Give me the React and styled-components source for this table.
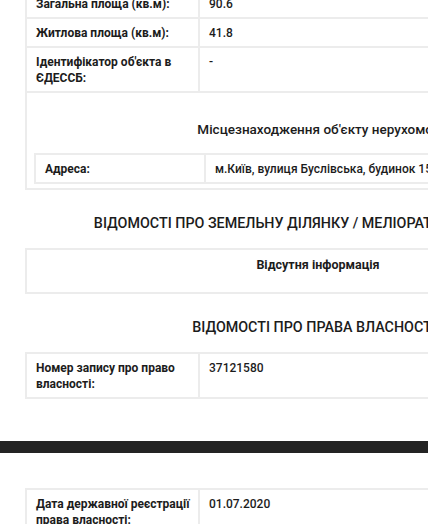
import React from "react";
import styled, { createGlobalStyle } from "styled-components";

const GlobalStyle = createGlobalStyle`
  html, body {
    margin: 0;
    padding: 0;
    background: #fff;
    overflow: hidden;
  }
  body {
    font-family: Roboto, "Liberation Sans", Arial, sans-serif;
    color: #1c1c1c;
  }
`;

const Viewport = styled.div`
  width: 428px;
  height: 524px;
  overflow: hidden;
`;

const Sheet = styled.div`
  width: 578px;
  padding-left: 25px;
  margin-top: ${(p) => p.$shift || "0"};
`;

const Card = styled.div`
  border: 2px solid #ececec;
  border-right: none;
`;

const Row = styled.div`
  display: grid;
  grid-template-columns: ${(p) => p.$label || "173px"} 1fr;
  border-bottom: ${(p) => (p.$last ? "none" : "2px solid #ececec")};
`;

const Label = styled.div`
  padding: 6px 9px 5px;
  font-size: 12px;
  line-height: 16px;
  font-weight: 700;
  white-space: nowrap;
  border-right: 2px solid #ececec;
`;

const Value = styled.div`
  padding: 6px 9px 5px;
  font-size: 12px;
  line-height: 16px;
  font-weight: 500;
  white-space: nowrap;
`;

const Location = styled.div`
  padding: 28px 0 4px 7px;
`;

const SubTitle = styled.div`
  text-align: center;
  font-size: 13.5px;
  line-height: 16px;
  font-weight: 500;
  padding-left: 50px;
  margin-bottom: 16px;
  white-space: nowrap;
`;

const InnerTable = styled.div`
  border: 2px solid #ececec;
  border-right: none;
`;

const SectionTitle = styled.div`
  text-align: center;
  font-size: 14.3px;
  line-height: 18px;
  font-weight: 500;
  white-space: nowrap;
  padding: 24px 0 16px;
`;

const Empty = styled.div`
  text-align: center;
  font-size: 12.5px;
  line-height: 16px;
  font-weight: 700;
  padding: 7px 0 19px 6px;
`;

const PageGap = styled.div`
  height: 12px;
  background: #232323;
  margin: 42px 0 35px;
`;

export default function App() {
  return (
    <Viewport>
      <GlobalStyle />
      <Sheet $shift="-12px">
        <Card>
          <Row>
            <Label>Загальна площа (кв.м):</Label>
            <Value>90.6</Value>
          </Row>
          <Row>
            <Label>Житлова площа (кв.м):</Label>
            <Value>41.8</Value>
          </Row>
          <Row>
            <Label>
              Ідентифікатор об'єкта в
              <br />
              ЄДЕССБ:
            </Label>
            <Value>-</Value>
          </Row>
          <Location>
            <SubTitle>Місцезнаходження об'єкту нерухомого майна</SubTitle>
            <InnerTable>
              <Row $last $label="170px">
                <Label>Адреса:</Label>
                <Value>м.Київ, вулиця Буслівська, будинок 15, квартира 1</Value>
              </Row>
            </InnerTable>
          </Location>
        </Card>

        <SectionTitle>ВІДОМОСТІ ПРО ЗЕМЕЛЬНУ ДІЛЯНКУ / МЕЛІОРАТИВНУ МЕРЕЖУ</SectionTitle>
        <Card>
          <Empty>Відсутня інформація</Empty>
        </Card>

        <SectionTitle>ВІДОМОСТІ ПРО ПРАВА ВЛАСНОСТІ</SectionTitle>
        <Card>
          <Row $last>
            <Label>
              Номер запису про право
              <br />
              власності:
            </Label>
            <Value>37121580</Value>
          </Row>
        </Card>
      </Sheet>

      <PageGap />

      <Sheet>
        <Card>
          <Row $last>
            <Label>
              Дата державної реєстрації
              <br />
              права власності:
            </Label>
            <Value>01.07.2020</Value>
          </Row>
        </Card>
      </Sheet>
    </Viewport>
  );
}
